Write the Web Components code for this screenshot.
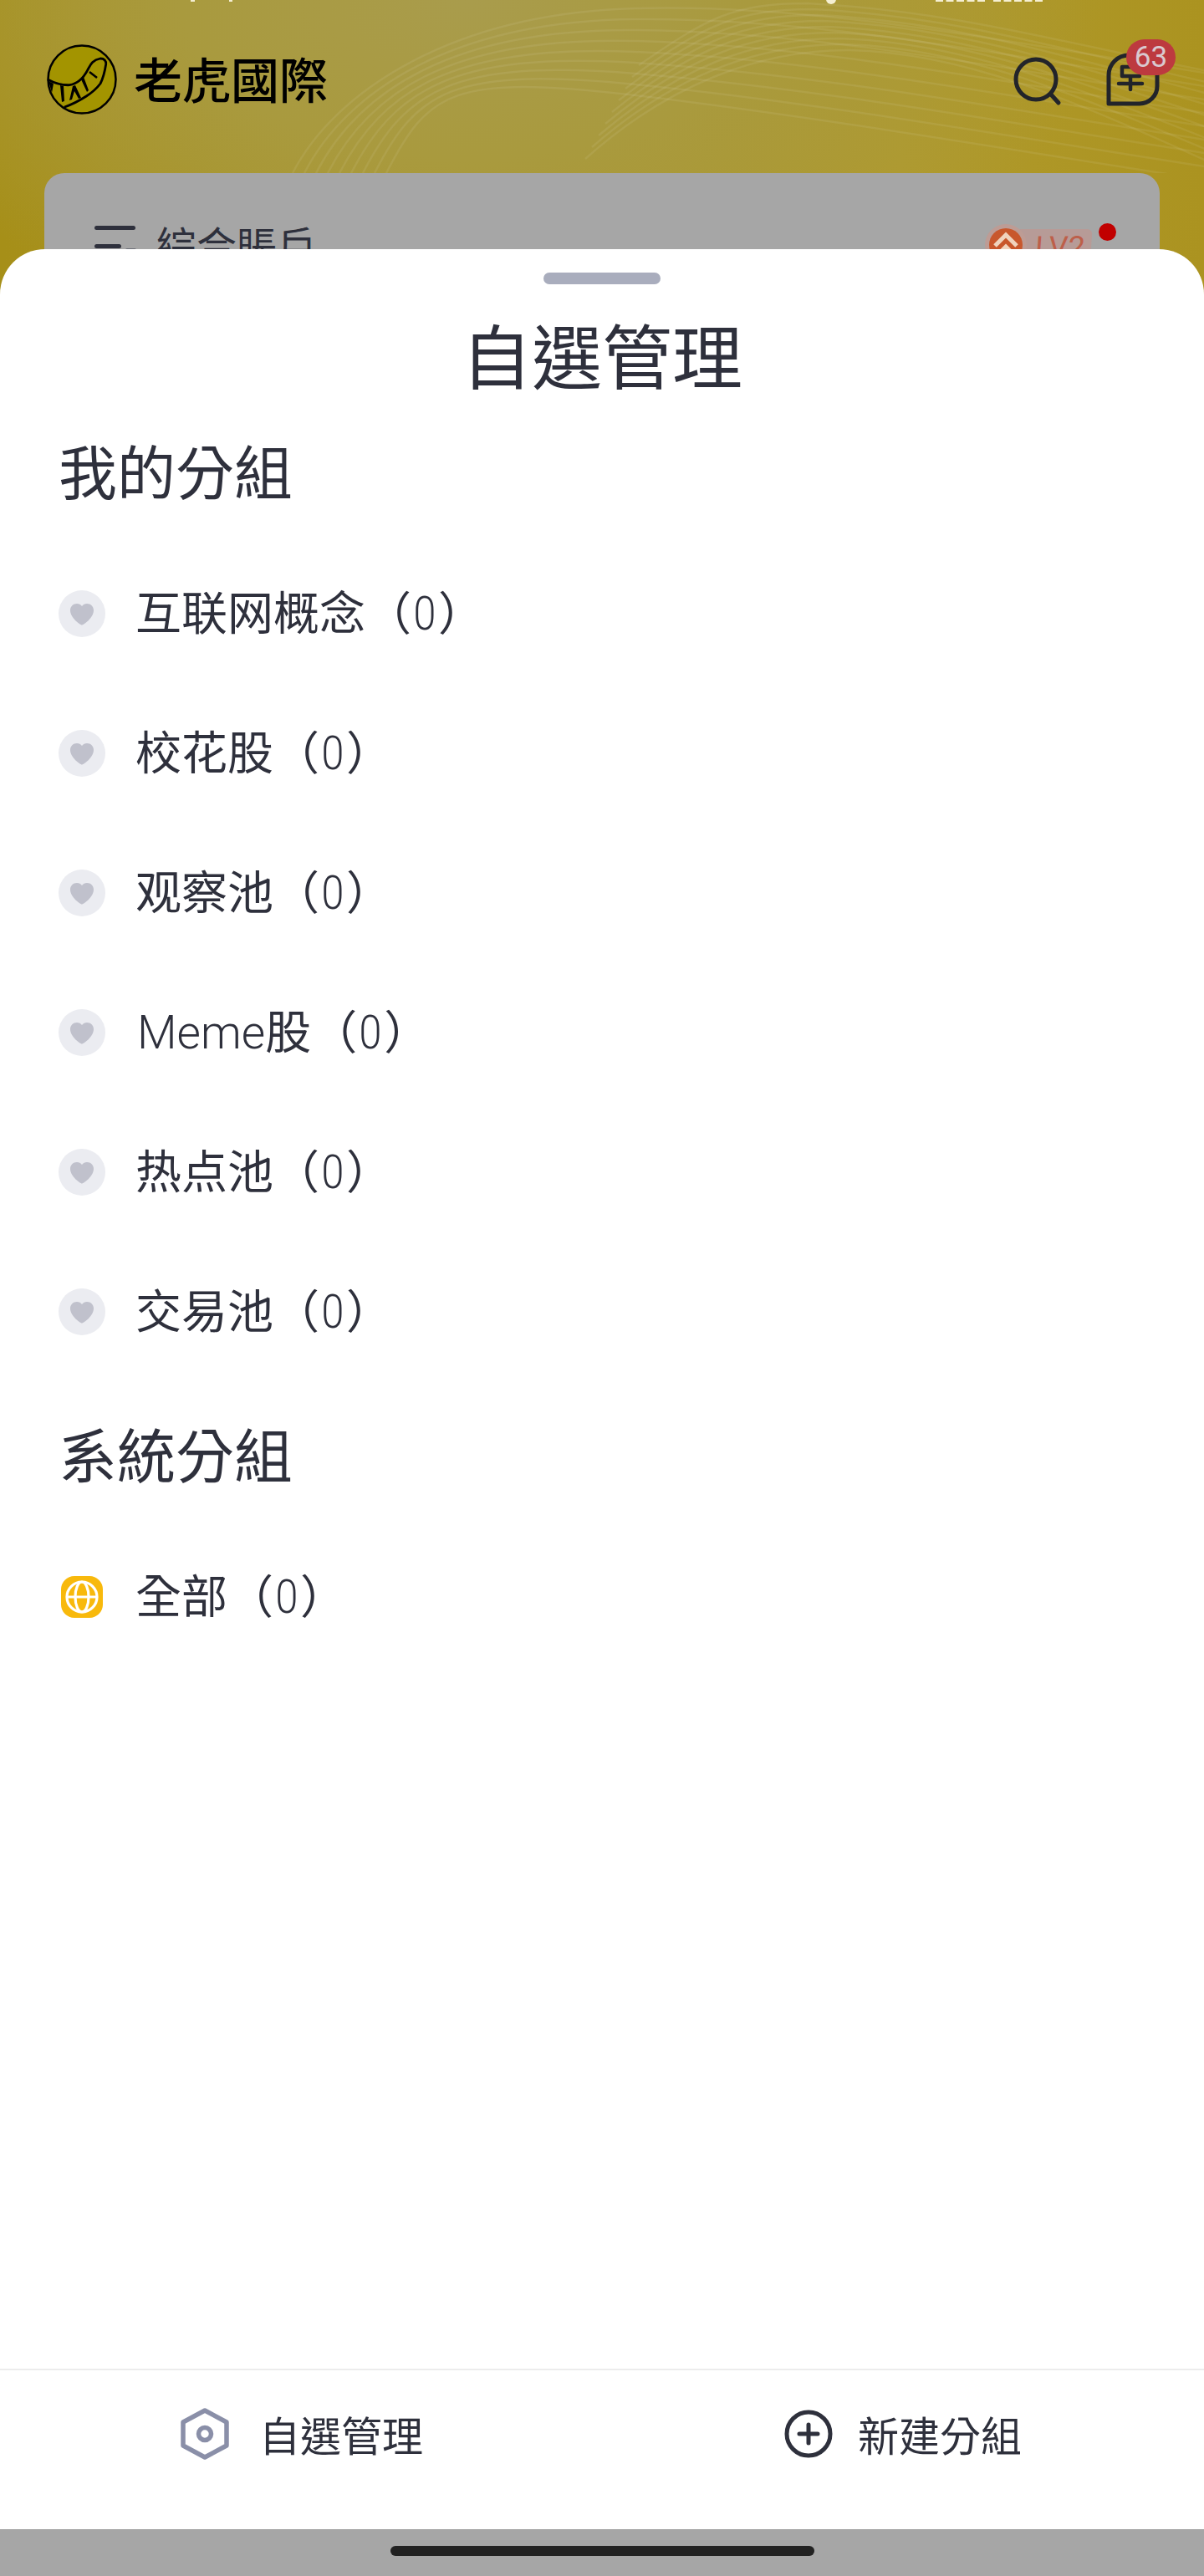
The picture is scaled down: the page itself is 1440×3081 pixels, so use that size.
<!DOCTYPE html>
<html lang="zh-Hant">
<head>
<meta charset="utf-8">
<title>自選管理</title>
<style>
  html, body { margin: 0; padding: 0; background: #a6a6a6; }
  body { font-family: "Noto Sans CJK TC", "Noto Sans", sans-serif; color: #2e303c; }
</style>
</head>
<body>
<app-screen>
  <home-backdrop slot="backdrop"></home-backdrop>
  <group-sheet slot="sheet">
    <section-title>我的分組</section-title>
    <group-row lang="zh-Hans">互联网概念</group-row>
    <group-row lang="zh-Hans">校花股</group-row>
    <group-row lang="zh-Hans">观察池</group-row>
    <group-row lang="zh-Hans"><span style="font-weight: 300; margin-left: 2px">Meme</span>股</group-row>
    <group-row lang="zh-Hans">热点池</group-row>
    <group-row lang="zh-Hans">交易池</group-row>
    <section-title second>系統分組</section-title>
    <group-row kind="globe">全部</group-row>
  </group-sheet>
</app-screen>

<script>
const CJK = '"Noto Sans CJK TC", "Noto Sans", sans-serif';

class AppScreen extends HTMLElement {
  constructor() {
    super();
    this.attachShadow({ mode: 'open' });
    this.shadowRoot.innerHTML = `
      <style>
        :host { display: block; position: relative; width: 1440px; height: 3081px; overflow: hidden; background: #a6a6a6; }
        #over { position: absolute; z-index: 2; left: 0; right: 0; top: 298px; bottom: 0; display: flex; flex-direction: column; }
        #nav { flex: none; height: 56px; display: flex; align-items: center; justify-content: center; background: #a6a6a6; }
        #bar { width: 507px; height: 12px; margin-top: -4px; border-radius: 6px; background: #222; }
      </style>
      <slot name="backdrop"></slot>
      <div id="over">
        <slot name="sheet"></slot>
        <div id="nav"><div id="bar"></div></div>
      </div>
    `;
  }
}

class HomeBackdrop extends HTMLElement {
  constructor() {
    super();
    this.attachShadow({ mode: 'open' });
    let curves = '';
    for (let i = 0; i < 9; i++) {
      // steep arcs rising from the card on the left, then sinking towards the right edge
      curves += `<path d="M${350 + i * 14} 207 C ${400 + i * 14} 110, 540 ${16 + i * 9}, 760 ${10 + i * 13} S 1200 ${50 + i * 16}, 1460 ${90 + i * 16}"/>`;
      // dome over the search icon
      curves += `<path d="M${700 + i * 8} ${190 - i * 14} C ${800 + i * 6} ${100 - i * 10}, ${910 - i * 4} ${60 - i * 7}, ${1014 - i * 6} ${60 - i * 7} C 1150 ${62 - i * 6}, 1280 ${118 - i * 8}, 1460 ${200 - i * 14}"/>`;
    }
    this.shadowRoot.innerHTML = `
      <style>
        :host { display: block; position: relative; height: 410px; overflow: hidden;
          background: radial-gradient(ellipse 760px 420px at 560px 0, #a99c4c 0%, #a99a3e 45%, rgba(170,148,38,0) 100%), linear-gradient(90deg, #a68f18 0%, #a9952c 40%, #b09a2c 75%, #ab9320 100%); }
        #lines { position: absolute; inset: 0; }
        #lines path { fill: none; stroke: #ffffff; stroke-opacity: .07; stroke-width: 2.5; }
        #status { position: absolute; inset: 0; }
        header { position: relative; box-sizing: border-box; height: 207px; padding: 53px 53px 0 56px; display: flex; align-items: flex-start; }
        #brand { display: flex; align-items: center; gap: 20px; height: 84px; font: 500 58px/84px ${CJK}; color: #000; }
        #brand span { margin-top: -5px; }
        #tools { margin-left: auto; display: flex; align-items: center; gap: 52px; height: 84px; }
        #search { margin-top: 5px; }
        #inbox { position: relative; width: 64px; height: 64px; }
        #badge { position: absolute; left: 24px; top: -16px; width: 59px; height: 43px; border-radius: 22px; background: #bd3a3f; color: #d9c9cf;
          font: 400 35px/43px Roboto, sans-serif; text-align: center; }
        #card { position: relative; margin: 0 53px; height: 260px; border-radius: 24px; background: #a6a6a6; }
        #acct { position: absolute; left: 60px; top: 54px; display: flex; align-items: flex-start; gap: 24px; font: 400 48px/60px ${CJK}; color: #2e303c; }
        #burger { display: block; margin-top: 9px; }
        #level { position: absolute; right: 82px; top: 67px; display: flex; align-items: flex-start; height: 44px; }
        #level svg { position: relative; z-index: 1; margin-top: -6px; flex: none; }
        #lvl { width: 91px; height: 44px; margin-left: -14px; padding-left: 24px; box-sizing: border-box; background: #b79b97; border-radius: 6px; font: 400 36px/44px Roboto, sans-serif; color: #bd5f4a; transform: skewX(-4deg); }
        #dot { position: absolute; right: 52px; top: 60px; width: 21px; height: 21px; border-radius: 50%; background: #c10000; }
      </style>
      <svg id="lines" width="1440" height="207" viewBox="0 0 1440 207">${curves}</svg>
      <svg id="status" width="1440" height="410" viewBox="0 0 1440 410" fill="#f5efd2">
        <rect x="228" y="0" width="5" height="2"/><rect x="274" y="0" width="4" height="2"/>
        <circle cx="994" cy="-1" r="6"/>
        <path d="M1119 1 H1179 M1188 1 H1248" stroke="#f5efd2" stroke-width="2" stroke-dasharray="9 3.500"/>
      </svg>
      <header>
        <div id="brand">
          <svg width="84" height="84" viewBox="0 0 84 84">
            <circle cx="42" cy="42" r="40.500" fill="#a39400" stroke="#000" stroke-width="2.500"/>
            <path d="M1 42 C 10 47 18 49 27 48.700 C 38 47 45 38 49 30.300 C 52 25 54 19 64 17 C 69 17 71 20 70.700 23.700 C 69 35 66 43 64 47 C 58 55 52 59 47.300 62 C 38 68 30 72 20.700 75.300" fill="none" stroke="#000" stroke-width="2.800" stroke-linejoin="round"/>
            <path d="M2 44 L8 47 L6 58 Z M16 49 L20 50 L21 68 L18 69 Z M31 50 L34 49 L41 64 L38 65 L33 56 L30 66 L27 67 Z M41 42 L44 39 L50 55 L48 57 Z"/>
            <path d="M51 33 L60 40" stroke="#000" stroke-width="2.500"/>
          </svg>
          <span>老虎國際</span>
        </div>
        <div id="tools">
          <svg id="search" width="60" height="62" viewBox="0 0 60 62" fill="none" stroke="#22242a" stroke-width="5" stroke-linecap="round">
            <circle cx="28" cy="28" r="24"/><path d="M46 46 L55 56"/>
          </svg>
          <div id="inbox">
            <svg width="64" height="64" viewBox="0 0 64 64" fill="none" stroke="#22242a" stroke-width="5" stroke-linejoin="round" stroke-linecap="round">
              <path d="M3 61 V27 A24 24 0 0 1 27 3 H37 A24 24 0 0 1 61 27 V40 A21 21 0 0 1 40 61 Z"/>
              <path d="M19 17 H40 M19 17 V28 H40 M15 37 H43 M29 28 V44" stroke-width="4.500"/>
            </svg>
            <div id="badge">63</div>
          </div>
        </div>
      </header>
      <div id="card">
        <div id="acct">
          <svg id="burger" width="50" height="40" viewBox="0 0 50 40" fill="#2e303c"><rect y="0" width="49" height="5" rx="2.500"/><rect y="22" width="32" height="5" rx="2.500"/><rect x="37" y="27" width="13" height="4" rx="2" fill="#6d6f78"/></svg>
          <span>綜合賬戶</span>
        </div>
        <div id="level">
          <svg width="50" height="50" viewBox="0 0 50 50"><circle cx="25" cy="25" r="25" fill="#bd9c95"/><circle cx="25" cy="25" r="20" fill="#c8572c"/><path d="M12 26 L25 13 L38 26 M17 35 L25 27 L33 35" fill="none" stroke="#f0d3bd" stroke-width="5"/></svg>
          <div id="lvl">LV2</div>
        </div>
        <div id="dot"></div>
      </div>
    `;
  }
}

class GroupSheet extends HTMLElement {
  constructor() {
    super();
    this.attachShadow({ mode: 'open' });
    this.shadowRoot.innerHTML = `
      <style>
        :host { flex: 1; min-height: 0; display: flex; flex-direction: column; background: #fff; border-radius: 54px 54px 0 0; color: #2e303c; }
        #grip { flex: none; width: 140px; height: 14px; margin: 28px auto 0; border-radius: 7px; background: #a9adbd; }
        h1 { flex: none; margin: 33px 0 0; height: 100px; font: 400 84px/100px ${CJK}; text-align: center; }
        #list { flex: 1; min-height: 0; padding: 44px 70px 0; }
        #foot { flex: none; height: 190px; display: grid; grid-template-columns: 1fr 1fr; border-top: 2px solid #ececec; }
        .act { display: flex; align-items: center; padding-bottom: 38px; font: 400 49px/60px ${CJK}; }
        .act.a { padding-left: 216px; gap: 36px; }
        .act.b { padding-left: 218px; gap: 30px; }
      </style>
      <div id="grip"></div>
      <h1>自選管理</h1>
      <div id="list"><slot></slot></div>
      <div id="foot">
        <div class="act a">
          <svg width="58" height="62" viewBox="0 0 58 62" fill="none" stroke="#8a8fa8" stroke-width="5.500" stroke-linejoin="round">
            <path d="M29 3 L55 17 V45 L29 59 L3 45 V17 Z"/><circle cx="29" cy="31" r="7.500"/>
          </svg>
          <span>自選管理</span>
        </div>
        <div class="act b">
          <svg width="58" height="58" viewBox="0 0 58 58" fill="none" stroke="#2e303c" stroke-width="5" stroke-linecap="round">
            <circle cx="29" cy="29" r="26"/><path d="M29 18 V40 M18 29 H40"/>
          </svg>
          <span>新建分組</span>
        </div>
      </div>
    `;
  }
}

class SectionTitle extends HTMLElement {
  constructor() {
    super();
    this.attachShadow({ mode: 'open' });
    this.shadowRoot.innerHTML = `
      <style>
        :host { display: block; height: 90px; padding-bottom: 43px; font: 400 70px/90px ${CJK}; }
        :host([second]) { margin-top: 41px; }
      </style>
      <slot></slot>
    `;
  }
}

class GroupRow extends HTMLElement {
  static icons = {
    heart: `<svg width="56" height="56" viewBox="0 0 56 56"><circle cx="28" cy="28" r="28" fill="#ebecf1"/><path d="M28 41.500 C 26 41.500 14 33 14 24 C 14 19.500 17.500 16 22 16 C 24.500 16 26.500 17 28 19 C 29.500 17 31.500 16 34 16 C 38.500 16 42 19.500 42 24 C 42 33 30 41.500 28 41.500 Z" fill="#c0c1cc"/></svg>`,
    globe: `<svg width="56" height="56" viewBox="0 0 56 56"><rect x="3" y="3" width="50" height="50" rx="16" fill="#f8b90c"/><g fill="none" stroke="#fff" stroke-width="3.200"><circle cx="28" cy="28" r="18"/><ellipse cx="28" cy="28" rx="8" ry="18"/><path d="M10 28 H46"/></g></svg>`
  };
  constructor() {
    super();
    this.attachShadow({ mode: 'open' });
    const icon = GroupRow.icons[this.getAttribute('kind') || 'heart'];
    const cjk = this.getAttribute('lang') === 'zh-Hans' ? '"Noto Sans CJK SC"' : '"Noto Sans CJK TC"';
    this.shadowRoot.innerHTML = `
      <style>
        :host { display: flex; align-items: center; height: 167px; gap: 36px; font: 400 55px/70px Roboto, ${cjk}, sans-serif; }
        svg { flex: none; }
        #zero { display: inline-block; width: 32px; text-align: center; font-weight: 300; transform: scaleX(.88); }
      </style>
      ${icon}
      <span><slot></slot>（<span id="zero">0</span>）</span>
    `;
  }
}

customElements.define('app-screen', AppScreen);
customElements.define('home-backdrop', HomeBackdrop);
customElements.define('group-sheet', GroupSheet);
customElements.define('section-title', SectionTitle);
customElements.define('group-row', GroupRow);
</script>
</body>
</html>
